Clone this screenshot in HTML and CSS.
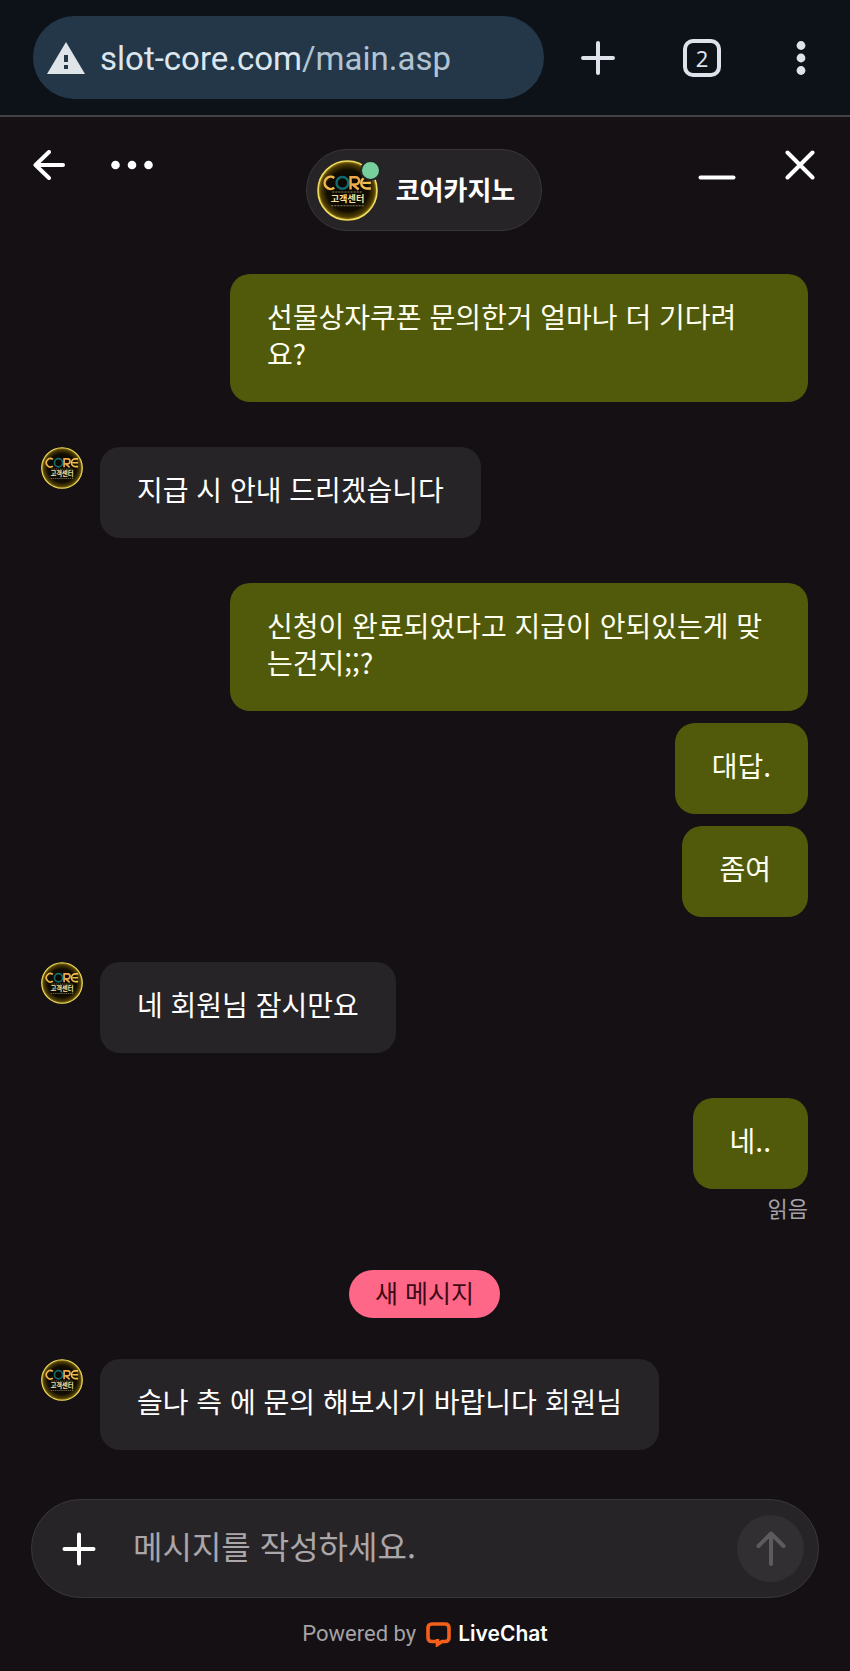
FILE: index.html
```html
<!DOCTYPE html>
<html lang="ko">
<head>
<meta charset="utf-8">
<meta name="viewport" content="width=device-width, initial-scale=1">
<title>코어카지노</title>
<link rel="stylesheet" href="styles.css">
</head>
<body>
<svg class="defs" aria-hidden="true">
  <defs>
    <radialGradient id="glow">
      <stop offset="0" stop-color="#080500"/>
      <stop offset="0.7" stop-color="#120c00"/>
      <stop offset="0.9" stop-color="#4d3d04"/>
      <stop offset="1" stop-color="#a68a1c"/>
    </radialGradient>
    <symbol id="logo" viewBox="0 0 60 60">
      <circle cx="30" cy="30" r="29" fill="url(#glow)"/>
      <circle cx="30" cy="30" r="29" fill="none" stroke="#f0dc5c" stroke-width="1.6"/>
      <g fill="none" stroke-width="2.4">
        <path d="M17 17.600A6 6 0 1 0 17 27.400" stroke="#f2b84c"/>
        <circle cx="25" cy="22.500" r="5.800" stroke="#0f6b70"/>
        <path d="M33 29V17h5a3.500 3.500 0 0 1 0 7h-3l6 5" stroke="#eda94a"/>
        <path d="M53 17h-4a5.500 5.500 0 0 0 0 11h4M45 22.500h8" stroke="#f2c04f"/>
      </g>
      <path d="M15 31.500h30M14 45h32" stroke="#8d8560" stroke-width="1" stroke-dasharray="2 1"/>
      <text x="30" y="41.500" text-anchor="middle" class="logo-text">고객센터</text>
    </symbol>
  </defs>
</svg>

<header class="browser">
  <div class="address">
    <svg class="warn" viewBox="0 0 38 32" aria-hidden="true"><path fill="#dfe4e9" fill-rule="evenodd" d="M19 0 38 32H0ZM17 13v7h4v-7ZM17 23v4h4v-4Z"/></svg>
    <span class="url">slot-core.com<span class="path">/main.asp</span></span>
  </div>
  <div class="tools">
    <button class="icon" aria-label="새 탭"><svg width="34" height="34" viewBox="0 0 34 34"><path d="M17 2v30M2 17h30" stroke="#dfe2ea" stroke-width="4" stroke-linecap="round"/></svg></button>
    <button class="icon tabs" aria-label="탭">2</button>
    <button class="icon" aria-label="메뉴"><svg width="24" height="34" viewBox="0 0 24 34" fill="#dfe2ea"><circle cx="12" cy="4.500" r="4.400"/><circle cx="12" cy="17" r="4.400"/><circle cx="12" cy="29.500" r="4.400"/></svg></button>
  </div>
</header>

<main class="chat">
  <div class="chat-head">
    <div class="side">
      <button class="icon" aria-label="뒤로"><svg width="32" height="30" viewBox="0 0 32 30"><path d="M16 2 2.500 15 16 28M3 15h27" fill="none" stroke="#fff" stroke-width="4" stroke-linecap="round" stroke-linejoin="round"/></svg></button>
      <button class="icon" aria-label="더 보기"><svg width="42" height="30" viewBox="0 0 42 30" fill="#fff"><circle cx="4.500" cy="15" r="4.300"/><circle cx="21" cy="15" r="4.300"/><circle cx="37.500" cy="15" r="4.300"/></svg></button>
    </div>
    <div class="agent">
      <span class="agent-photo"><svg class="avatar-lg" role="img" aria-label="CORE 고객센터"><use href="#logo"/></svg><span class="online"></span></span>
      <h1 class="agent-name">코어카지노</h1>
    </div>
    <div class="side end">
      <button class="icon" aria-label="최소화"><svg width="38" height="30" viewBox="0 0 38 30"><path d="M2.500 27.500h33" stroke="#fff" stroke-width="4" stroke-linecap="round"/></svg></button>
      <button class="icon" aria-label="닫기"><svg width="30" height="30" viewBox="0 0 30 30"><path d="M2.500 2.500l25 25M27.500 2.500l-25 25" stroke="#fff" stroke-width="4" stroke-linecap="round"/></svg></button>
    </div>
  </div>

  <div class="messages">
    <div class="group mine">
      <p class="bubble">선물상자쿠폰 문의한거 얼마나 더 기다려요?</p>
    </div>
    <div class="group theirs">
      <svg class="avatar" role="img" aria-label="CORE 고객센터"><use href="#logo"/></svg>
      <p class="bubble">지급 시 안내 드리겠습니다</p>
    </div>
    <div class="group mine">
      <p class="bubble">신청이 완료되었다고 지급이 안되있는게 맞는건지;;?</p>
      <p class="bubble">대답.</p>
      <p class="bubble">좀여</p>
    </div>
    <div class="group theirs">
      <svg class="avatar" role="img" aria-label="CORE 고객센터"><use href="#logo"/></svg>
      <p class="bubble">네 회원님 잠시만요</p>
    </div>
    <div class="group mine last">
      <p class="bubble">네..</p>
      <span class="read">읽음</span>
    </div>
    <div class="divider"><span class="new">새 메시지</span></div>
    <div class="group theirs">
      <svg class="avatar" role="img" aria-label="CORE 고객센터"><use href="#logo"/></svg>
      <p class="bubble">슬나 측 에 문의 해보시기 바랍니다 회원님</p>
    </div>
  </div>

  <form class="composer">
    <button type="button" class="icon" aria-label="첨부"><svg width="34" height="34" viewBox="0 0 34 34"><path d="M17 2.500v29M2.500 17h29" stroke="#fff" stroke-width="4" stroke-linecap="round"/></svg></button>
    <input class="field" type="text" placeholder="메시지를 작성하세요." aria-label="메시지">
    <button type="button" class="send" aria-label="보내기"><svg width="30" height="36" viewBox="0 0 30 36"><path d="M15 33V3M2.500 15 15 2.500 27.500 15" fill="none" stroke="#5d5b5e" stroke-width="4" stroke-linecap="round" stroke-linejoin="round"/></svg></button>
  </form>

  <footer class="powered">
    <span>Powered by</span>
    <a class="brand" href="#livechat"><svg width="25" height="25" viewBox="0 0 25 25" aria-hidden="true"><path d="M6 2h13q4 0 4 4v9.500q0 4-4 4h-3L11.500 22.500V17M6 2Q2 2 2 6v9.500q0 4 4 4h5" fill="none" stroke="#f4601a" stroke-width="3.600" stroke-linejoin="miter"/></svg>LiveChat</a>
  </footer>
</main>
</body>
</html>
```

FILE: styles.css
```css
* { box-sizing: border-box; }

body {
  margin: 0;
  min-height: 100vh;
  display: flex;
  flex-direction: column;
  background: #141013;
  color: #fff;
  font-family: "Noto Sans CJK KR", sans-serif;
}

.defs { position: absolute; width: 0; height: 0; }

.logo-text { font-size: 9px; font-weight: 700; fill: #f3e3a0; }

.icon {
  display: flex;
  align-items: center;
  justify-content: center;
  padding: 0;
  border: 0;
  background: none;
  color: inherit;
}

/* Browser bar */
.browser {
  display: flex;
  align-items: center;
  padding: 16px 37px 16px 33px;
  background: #0d1219;
  border-bottom: 2px solid #434345;
}

.address {
  display: flex;
  align-items: center;
  flex: 0 1 511px;
  height: 83px;
  padding: 0 14px;
  gap: 15px;
  border-radius: 42px;
  background: #243748;
}

.warn { flex: none; width: 38px; height: 32px; }

.url {
  padding-top: 2px;
  color: #dce6ee;
  font-family: Roboto, sans-serif;
  font-size: 33px;
  line-height: 40px;
  white-space: nowrap;
}

.path { color: #b2c3d2; }

.tools {
  flex: 1;
  display: flex;
  align-items: center;
  justify-content: space-between;
  padding-left: 37px;
}

.tabs {
  width: 38px;
  height: 38px;
  border: 4px solid #dfe2ea;
  border-radius: 10px;
  color: #dfe2ea;
  font: 400 22px/28px "Noto Sans", sans-serif;
}

/* Chat */
.chat { flex: 1; display: flex; flex-direction: column; }

.chat-head {
  display: grid;
  grid-template-columns: 1fr auto 1fr;
  align-items: start;
  padding: 32px 35px 43px 33px;
}

.side { display: flex; gap: 46px; padding-top: 1px; }

.end { justify-content: flex-end; gap: 49px; }

.agent {
  display: flex;
  align-items: center;
  gap: 18px;
  height: 82px;
  padding: 0 26px 0 10px;
  border: 1px solid #39373a;
  border-radius: 41px;
  background: #272427;
}

.agent-photo { position: relative; display: flex; }

.avatar-lg { width: 61px; height: 61px; }

.online {
  position: absolute;
  top: 0;
  right: -3px;
  width: 21px;
  height: 21px;
  border: 2px solid #272427;
  border-radius: 50%;
  background: #76cf9c;
}

.agent-name { margin: 0; padding-bottom: 2px; font-size: 26px; line-height: 38px; font-weight: 700; }

.messages {
  flex: 1;
  display: flex;
  flex-direction: column;
  gap: 45px;
  padding: 0 42px 0 41px;
}

.group { display: flex; }

.mine { flex-direction: column; align-items: flex-end; gap: 12px; }

.theirs { align-items: flex-start; gap: 17px; }

.last { gap: 3px; padding-bottom: 3px; }

.avatar { flex: none; width: 42px; height: 42px; }

.bubble {
  max-width: 68vw;
  margin: 0;
  padding: 24px 37px 30px;
  border-radius: 20px;
  font-size: 28px;
  line-height: 37px;
}

.mine .bubble { background: #505a0a; color: #fffff0; }

.theirs .bubble { background: #272427; }

.read { color: #a5a2a5; font-size: 22px; line-height: 30px; }

.divider { display: flex; justify-content: center; margin-bottom: -4px; }

.new {
  padding: 3px 26px 7px;
  border-radius: 24px;
  background: #ff6788;
  color: #3c0a16;
  font-size: 25px;
  line-height: 38px;
}

.composer {
  display: flex;
  align-items: center;
  height: 99px;
  margin: 45px 31px 0;
  padding: 0 14px 0 30px;
  border: 1px solid #3a373a;
  border-radius: 50px;
  background: #272427;
}

.field {
  flex: 1;
  min-width: 0;
  height: 60px;
  margin: 0 20px 8px 37px;
  padding: 0;
  border: 0;
  outline: 0;
  background: none;
  color: #fff;
  font: 32px/48px "Noto Sans CJK KR", sans-serif;
}

.field::placeholder { color: #aaa6a9; opacity: 1; }

.send {
  display: flex;
  align-items: center;
  justify-content: center;
  width: 67px;
  height: 67px;
  padding: 0;
  border: 0;
  border-radius: 50%;
  background: #312f31;
}

.powered {
  display: flex;
  align-items: center;
  justify-content: center;
  gap: 10px;
  padding: 20px 0 21px;
  color: #a5a2a5;
  font: 22px/32px Roboto, sans-serif;
}

.brand {
  display: flex;
  align-items: center;
  gap: 7px;
  color: #fff;
  font: 600 21px/32px Inter, sans-serif;
  text-decoration: none;
}
```
